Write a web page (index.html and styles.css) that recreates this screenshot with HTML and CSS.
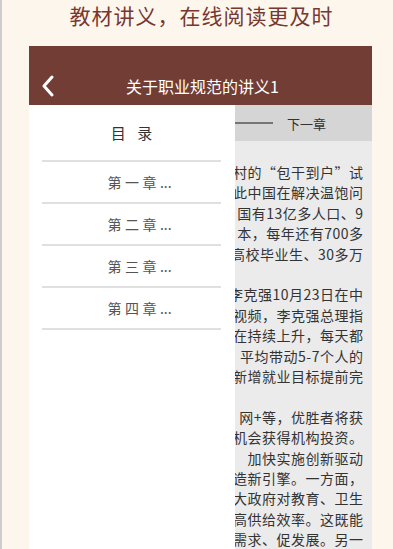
FILE: index.html
```html
<!DOCTYPE html>
<html lang="zh-CN">
<head>
<meta charset="utf-8">
<title>教材讲义</title>
<link rel="stylesheet" href="styles.css">
</head>
<body>
<div class="page">
  <h1 class="slogan">教材讲义，在线阅读更及时</h1>
  <div class="phone">
    <header class="bar">
      <div class="bar-row">
        <svg class="back" width="12" height="22" viewBox="0 0 12 22"><polyline points="10,2 2,11 10,20" fill="none" stroke="#fff" stroke-width="3" stroke-linecap="round" stroke-linejoin="round"/></svg>
        <span class="bar-title">关于职业规范的讲义1</span>
      </div>
    </header>
    <div class="main">
      <section class="reader">
        <div class="nav"><span class="rule"></span><span class="next">下一章</span></div>
        <div class="text">
          <div class="ln">岗村的“包干到户”试</div>
          <div class="ln">此中国在解决温饱问</div>
          <div class="ln">，国有13亿多人口、9</div>
          <div class="ln">本，每年还有700多</div>
          <div class="ln">高校毕业生、30多万</div>
          <div class="ln gap">李克强10月23日在中</div>
          <div class="ln">视频，李克强总理指</div>
          <div class="ln">在持续上升，每天都</div>
          <div class="ln">平均带动5-7个人的</div>
          <div class="ln">新增就业目标提前完</div>
          <div class="ln gap">网+等，优胜者将获</div>
          <div class="ln">机会获得机构投资。</div>
          <div class="ln">加快实施创新驱动</div>
          <div class="ln">造新引擎。一方面，</div>
          <div class="ln">大政府对教育、卫生</div>
          <div class="ln">高供给效率。这既能</div>
          <div class="ln">需求、促发展。另一</div>
        </div>
      </section>
      <aside class="drawer">
        <div class="toc-title">目 录</div>
        <ul class="toc">
          <li>第一章<span class="dots">...</span></li>
          <li>第二章<span class="dots">...</span></li>
          <li>第三章<span class="dots">...</span></li>
          <li>第四章<span class="dots">...</span></li>
        </ul>
      </aside>
    </div>
  </div>
</div>
</body>
</html>
```

FILE: styles.css
```css
* { box-sizing: border-box; margin: 0; padding: 0; }
html, body { width: 393px; height: 549px; overflow: hidden; }
body {
  background: #fdf6ec;
  font-family: "Noto Sans CJK SC", "Noto Sans", sans-serif;
  border-left: 2px solid #cdcdcd;
}
.page {
  height: 549px;
  display: flex;
  flex-direction: column;
  padding-left: 27px;
  padding-right: 21px;
}
.slogan {
  height: 46px;
  font-size: 21px;
  font-weight: 400;
  line-height: 30px;
  color: #763830;
  text-align: center;
  letter-spacing: 1px;
  padding-left: 2px;
}
.phone {
  flex: 1;
  display: flex;
  flex-direction: column;
  overflow: hidden;
}
.bar {
  height: 59px;
  background: #723d34;
  padding-top: 20px;
}
.bar-row {
  height: 39px;
  display: flex;
  align-items: center;
  padding-left: 13px;
}
.back { display: block; }
.bar-title {
  flex: 1;
  text-align: center;
  color: #fff;
  font-size: 16px;
  margin-left: -8px;
  padding-right: 13px;
}
.main {
  flex: 1;
  position: relative;
  display: flex;
}
.reader {
  flex: 1;
  display: flex;
  flex-direction: column;
  background: #ebebeb;
}
.nav {
  height: 36px;
  background: #d5d5d5;
  display: flex;
  align-items: center;
  justify-content: flex-end;
  padding-right: 46px;
}
.rule {
  width: 60px;
  height: 2px;
  background: #757575;
}
.next {
  margin-left: 14px;
  font-size: 13px;
  color: #333;
}
.text {
  padding: 21px 9px 0 12px;
  font-size: 14px;
  line-height: 20.4px;
  letter-spacing: 0.5px;
  color: #333;
}
.ln {
  white-space: nowrap;
  text-align: right;
  margin-right: -0.5px;
}
.ln.gap { margin-top: 20.4px; }
.drawer {
  position: absolute;
  left: 0;
  top: 0;
  bottom: 0;
  width: 206px;
  background: #fff;
  padding: 0 14px 0 13px;
}
.toc-title {
  height: 57px;
  line-height: 56px;
  text-align: center;
  font-size: 15px;
  color: #333;
  letter-spacing: 4px;
  padding-left: 4px;
  border-bottom: 2px solid #e0e0e0;
}
.toc { list-style: none; }
.toc li {
  height: 42px;
  line-height: 40px;
  text-align: center;
  font-size: 14px;
  color: #555;
  letter-spacing: 3.5px;
  padding-left: 16px;
  border-bottom: 2px solid #e0e0e0;
}
.dots { letter-spacing: 0; }
```
